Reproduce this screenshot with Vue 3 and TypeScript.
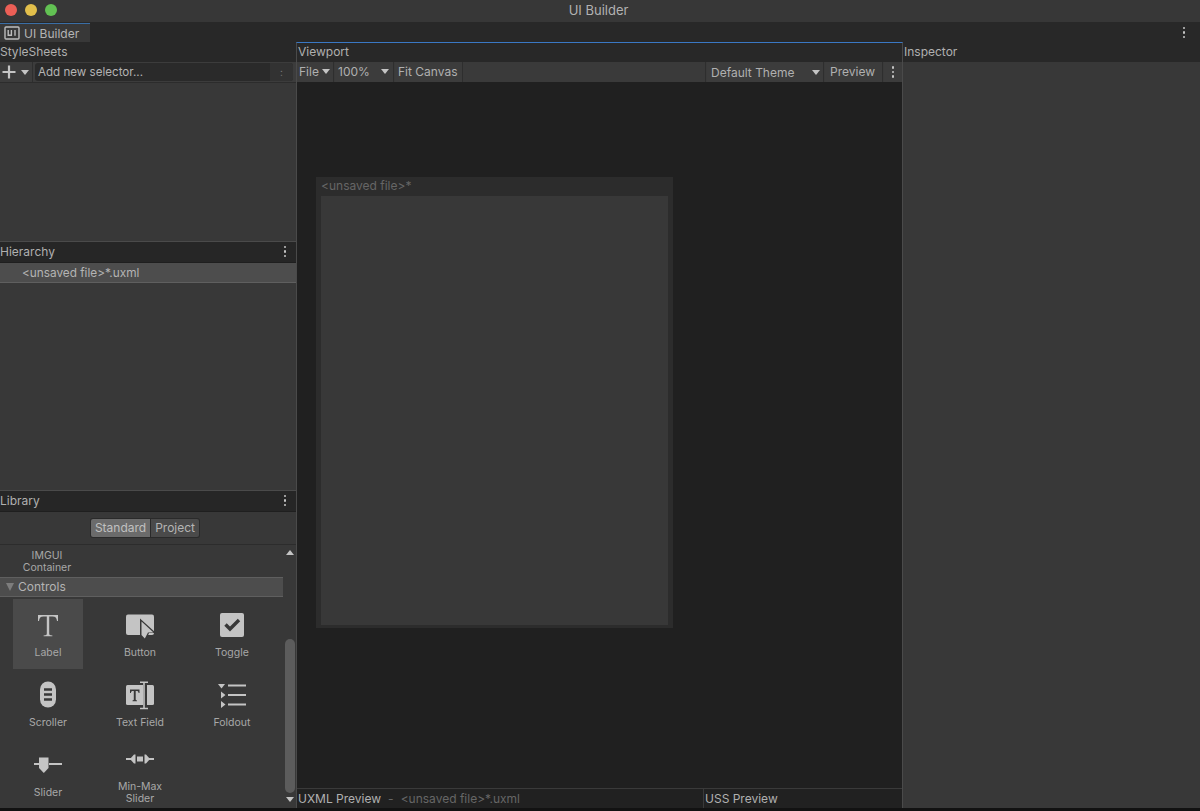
<script setup lang="ts">
interface Shape { d: string; fill?: string; stroke?: string; sw?: number }
interface Item { name: string[]; shapes: Shape[]; hot?: boolean }
const L = '#c4c4c4'
const D = '#383838'
const items: Item[] = [
  { name: ['Label'], hot: true, shapes: [
    { d: 'M6 6H26V12H25C24.6 9 23.6 7.6 20.5 7.6H17.2V24.5C17.2 26 18 26.2 20.4 26.4V27.2H11.6V26.4C14 26.2 14.8 26 14.8 24.5V7.6H11.5C8.4 7.6 7.4 9 7 12H6Z', fill: L } ] },
  { name: ['Button'], shapes: [
    { d: 'M4 5.5H28Q30 5.5 30 7.5V24Q30 26 28 26H4Q2 26 2 24V7.5Q2 5.5 4 5.5Z', fill: L },
    { d: 'M16 9.5L32 24H25L21.5 32L16 27Z', fill: D },
    { d: 'M17.5 12.5L29.5 23.5H24L20.8 29.5L17.5 26Z', fill: L } ] },
  { name: ['Toggle'], shapes: [
    { d: 'M6 4H26Q28 4 28 6V26Q28 28 26 28H6Q4 28 4 26V6Q4 4 6 4Z', fill: L },
    { d: 'M9.5 15.5L14 20L23 11', stroke: D, sw: 3.4 } ] },
  { name: ['Scroller'], shapes: [
    { d: 'M8 10.5A8 8 0 0 1 24 10.5V20.5A8 8 0 0 1 8 20.5Z', fill: L },
    { d: 'M12 10.5H20M12 15.5H20M12 20.5H20', stroke: D, sw: 2.4 } ] },
  { name: ['Text Field'], shapes: [
    { d: 'M3.5 6H19V26H3.5Q2 26 2 24.5V7.5Q2 6 3.5 6Z', fill: L },
    { d: 'M23 6H28.5Q30 6 30 7.5V24.5Q30 26 28.5 26H23Z', fill: L },
    { d: 'M16 3.2H24M20 3.2V29.5M16 29.5H24', stroke: L, sw: 1.6 },
    { d: 'M6 10.5H15.5V14H14.6C14.4 12.4 14 12 12.4 12H11.7V20.6C11.7 21.2 12 21.3 13 21.4V22.2H8.5V21.4C9.5 21.3 9.8 21.2 9.8 20.6V12H9.1C7.5 12 7.1 12.4 6.9 14H6Z', fill: D } ] },
  { name: ['Foldout'], shapes: [
    { d: 'M2 5H9L5.5 9.5Z', fill: L },
    { d: 'M12 6.5H30M12 16H30M12 25.5H30', stroke: L, sw: 1.8 },
    { d: 'M5 12.5L9.5 16L5 19.5ZM5 22L9.5 25.5L5 29Z', fill: L } ] },
  { name: ['Slider'], shapes: [
    { d: 'M2 15H7M17 15H30', stroke: L, sw: 1.8 },
    { d: 'M7 8.5H16.5V19L11.8 24L7 19Z', fill: L } ] },
  { name: ['Min-Max', 'Slider'], shapes: [
    { d: 'M2 16H7M25 16H30', stroke: L, sw: 2.2 },
    { d: 'M6 16L10 11.5H11.5V20.5H10ZM26 16L22 11.5H20.5V20.5H22Z', fill: L },
    { d: 'M13 13.5H19V18.5H13Z', fill: L } ] },
]
</script>

<template>
  <div class="app">
    <div class="titlebar">
      <div class="lights">
        <span class="light red"></span>
        <span class="light yellow"></span>
        <span class="light green"></span>
      </div>
      <span class="win-title">UI Builder</span>
    </div>

    <div class="tabstrip">
      <div class="tab">
        <svg class="tab-icon" width="16" height="14" viewBox="0 0 16 14">
          <rect x="1" y="1" width="14" height="12" rx="1" fill="none" stroke="#bdbdbd" stroke-width="1.4" />
          <path d="M4.2 4V9.2H7.4V4M11 4V9.8" fill="none" stroke="#bdbdbd" stroke-width="1.4" />
        </svg>
        <span>UI Builder</span>
      </div>
      <span class="kebab tab-kebab"><i></i><i></i><i></i></span>
    </div>

    <div class="main">
      <aside class="left">
        <div class="head top">StyleSheets</div>
        <div class="sel-bar">
          <div class="plus-wrap">
            <svg width="14" height="14" viewBox="0 0 14 14"><path d="M7 0.5V13.5M0.5 7H13.5" stroke="#c4c4c4" stroke-width="2.2" /></svg>
            <span class="tri small"></span>
          </div>
          <div class="sel-input">
            <span>Add new selector...</span>
            <span class="stepper">:</span>
          </div>
        </div>
        <div class="sheet-body"></div>

        <div class="head bordered">Hierarchy<span class="kebab"><i></i><i></i><i></i></span></div>
        <div class="hier-row">&lt;unsaved file&gt;*.uxml</div>
        <div class="hier-body"></div>

        <div class="head bordered">Library<span class="kebab"><i></i><i></i><i></i></span></div>
        <div class="lib-tabs">
          <div class="seg">
            <span class="seg-btn on">Standard</span>
            <span class="seg-btn">Project</span>
          </div>
        </div>
        <div class="lib-body">
          <div class="lib-list">
            <div class="imgui">IMGUI<br />Container</div>
            <div class="group"><span class="group-tri"></span>Controls</div>
            <div class="grid">
              <div v-for="item in items" :key="item.name.join()" class="cell" :class="{ hot: item.hot }">
                <svg class="cell-icon" width="32" height="32" viewBox="0 0 32 32">
                  <path v-for="(s, i) in item.shapes" :key="i" :d="s.d" :fill="s.fill || 'none'" :stroke="s.stroke || 'none'" :stroke-width="s.sw || 0" />
                </svg>
                <div class="cell-label">
                  <div v-for="n in item.name" :key="n">{{ n }}</div>
                </div>
              </div>
            </div>
          </div>
          <div class="scroll">
            <span class="arrow up"></span>
            <div class="track"><div class="thumb"></div></div>
            <span class="arrow down"></span>
          </div>
        </div>
      </aside>

      <section class="center">
        <div class="head plain">Viewport</div>
        <div class="vp-bar">
          <div class="vp-btn file">File<span class="tri"></span></div>
          <div class="vp-btn zoom">100%<span class="tri"></span></div>
          <div class="vp-btn fit">Fit Canvas</div>
          <div class="vp-space"></div>
          <div class="vp-btn theme">Default Theme<span class="tri"></span></div>
          <div class="vp-btn prev">Preview</div>
          <div class="vp-kebab"><span class="kebab"><i></i><i></i><i></i></span></div>
        </div>
        <div class="stage">
          <div class="canvas">
            <div class="canvas-title">&lt;unsaved file&gt;*</div>
            <div class="canvas-inner"></div>
          </div>
        </div>
        <div class="preview-bar">
          <div class="uxml"><span>UXML Preview</span><span class="muted dash">-</span><span class="muted">&lt;unsaved file&gt;*.uxml</span></div>
          <div class="uss">USS Preview</div>
        </div>
      </section>

      <aside class="right">
        <div class="head plain insp">Inspector</div>
        <div class="insp-body"></div>
      </aside>
    </div>
    <div class="foot"></div>
  </div>
</template>

<style scoped>
.app {
  width: 1200px;
  height: 811px;
  display: flex;
  flex-direction: column;
  overflow: hidden;
  background: #383838;
  color: #b0b0b0;
  font-family: Inter, "Liberation Sans", sans-serif;
  font-size: 12px;
}
.titlebar {
  height: 22px;
  flex: none;
  background: #373737;
  position: relative;
  display: flex;
  align-items: center;
  justify-content: center;
}
.lights { position: absolute; left: 5px; top: 4px; display: flex; gap: 8px; }
.light { width: 12px; height: 12px; border-radius: 50%; }
.red { background: #ec5f56; }
.yellow { background: #e2bf4b; }
.green { background: #62c153; }
.win-title { font-size: 13px; color: #b2b2b2; margin-left: -3px; margin-top: -2px; }
.tabstrip {
  height: 20px;
  flex: none;
  background: #282828;
  display: flex;
  align-items: flex-end;
  justify-content: space-between;
}
.tab {
  width: 90px;
  height: 19px;
  background: #383838;
  border-top: 1px solid #3a6ea5;
  box-sizing: border-box;
  display: flex;
  align-items: center;
  padding-left: 4px;
  gap: 4px;
  color: #b4b4b4;
}
.tab-kebab { margin: 0 15px 4px 0; }
.kebab { display: inline-flex; flex-direction: column; gap: 2px; }
.kebab i { width: 2.4px; height: 2.4px; border-radius: 50%; background: #c4c4c4; display: block; }
.main { flex: 1; display: flex; min-height: 0; }
.left { width: 296px; flex: none; display: flex; flex-direction: column; background: #383838; }
.head {
  height: 20px;
  flex: none;
  background: #282828;
  display: flex;
  align-items: center;
  justify-content: space-between;
  padding: 0 10px 0 0;
  box-sizing: border-box;
}
.head.top { padding-bottom: 1px; }
.head.bordered {
  height: 22px;
  border-top: 1px solid #4a4a4a;
  border-bottom: 1px solid #1f1f1f;
  background: #262626;
  padding-bottom: 1px;
}
.head.plain { padding-left: 1px; padding-bottom: 1px; }
.center .head.plain { height: 19px; padding-bottom: 2px; }
.sel-bar {
  height: 21px;
  flex: none;
  display: flex;
  background: #3c3c3c;
  border-bottom: 1px solid #2c2c2c;
  box-sizing: border-box;
}
.plus-wrap {
  width: 33px;
  flex: none;
  display: flex;
  align-items: center;
  gap: 5px;
  padding-left: 2px;
  box-sizing: border-box;
  border-right: 1px solid #2e2e2e;
}
.tri {
  width: 0;
  height: 0;
  border-left: 4px solid transparent;
  border-right: 4px solid transparent;
  border-top: 5px solid #c4c4c4;
  display: inline-block;
}
.sel-input {
  margin: 1px 3px 1px 2px;
  flex: 1;
  background: #2a2a2a;
  border-radius: 3px;
  display: flex;
  justify-content: space-between;
  padding-left: 3px;
  align-items: center;
  color: #b4b4b4;
  font-size: 11.6px;
}
.stepper {
  width: 23px;
  align-self: stretch;
  background: #323232;
  color: #777;
  text-align: center;
  font-size: 10px;
  line-height: 18px;
  border-radius: 0 3px 3px 0;
}
.sheet-body { height: 158px; flex: none; }
.hier-row {
  height: 20px;
  flex: none;
  background: #4d4d4d;
  border-bottom: 1px solid #5f5f5f;
  box-sizing: border-box;
  padding-left: 22px;
  line-height: 21px;
  color: #b4b4b4;
  font-size: 11.8px;
}
.hier-body { height: 207px; flex: none; }
.lib-tabs {
  height: 33px;
  flex: none;
  display: flex;
  justify-content: center;
  align-items: center;
  border-bottom: 1px solid #2c2c2c;
  box-sizing: border-box;
  padding-right: 6px;
}
.seg { display: flex; background: #2a2a2a; border-radius: 3px; padding: 1px; gap: 1px; }
.seg-btn { height: 18px; line-height: 18px; background: #4a4a4a; padding: 0 4px; color: #b4b4b4; border-radius: 0 2px 2px 0; }
.seg-btn.on { background: #6b6b6b; color: #c0c0c0; border-radius: 2px 0 0 2px; padding: 0 4px; }
.lib-body { flex: 1; display: flex; min-height: 0; }
.lib-list { width: 283px; flex: none; overflow: hidden; }
.imgui {
  width: 70px;
  margin-left: 12px;
  padding-top: 5px;
  height: 27px;
  box-sizing: content-box;
  text-align: center;
  font-size: 10.5px;
  line-height: 12px;
  color: #a8a8a8;
}
.group {
  height: 20px;
  background: #4d4d4d;
  border-top: 1px solid #5f5f5f;
  border-bottom: 1px solid #5f5f5f;
  box-sizing: border-box;
  display: flex;
  align-items: center;
  gap: 4px;
  padding-left: 6px;
  padding-bottom: 1px;
  color: #b4b4b4;
}
.group-tri {
  width: 0;
  height: 0;
  border-left: 4.5px solid transparent;
  border-right: 4.5px solid transparent;
  border-top: 8px solid #7d7d7d;
}
.grid {
  display: grid;
  grid-template-columns: repeat(3, 70px);
  grid-auto-rows: 70px;
  column-gap: 22px;
  padding-left: 13px;
  padding-top: 2px;
}
.cell {
  display: flex;
  flex-direction: column;
  align-items: center;
  justify-content: center;
  gap: 6px;
  color: #a8a8a8;
  font-size: 10.5px;
  line-height: 12px;
  text-align: center;
}
.cell.hot { background: #4a4a4a; }
.cell-icon { flex: none; margin-top: -1px; }
.cell-label { white-space: nowrap; }
.scroll { width: 13px; flex: none; display: flex; flex-direction: column; align-items: center; padding-top: 5px; box-sizing: border-box; }
.arrow { width: 0; height: 0; border-left: 4px solid transparent; border-right: 4px solid transparent; flex: none; }
.arrow.up { border-bottom: 5px solid #c4c4c4; }
.arrow.down { border-top: 5px solid #c4c4c4; margin-bottom: 6px; }
.track { flex: 1; width: 100%; display: flex; flex-direction: column; justify-content: flex-end; align-items: center; padding-bottom: 4px; box-sizing: border-box; }
.thumb { width: 10px; height: 154px; background: #5c5c5c; border-radius: 5px; }
.center {
  width: 607px;
  flex: none;
  display: flex;
  flex-direction: column;
  box-sizing: border-box;
  border-top: 1px solid #3a78c4;
  border-left: 1px solid #4a4a4a;
  border-right: 1px solid #4a4a4a;
  background: #202020;
}
.vp-bar { height: 20px; flex: none; display: flex; background: #3a3a3a; gap: 1px; white-space: nowrap; }
.vp-btn {
  background: #3c3c3c;
  display: flex;
  align-items: center;
  justify-content: space-between;
  box-sizing: border-box;
  padding: 0 3px 1px;
  color: #b0b0b0;
  border-right: 1px solid #2e2e2e;
}
.file { width: 37px; padding-left: 2px; }
.zoom { width: 59px; padding-right: 4px; }
.fit { width: 68px; }
.vp-space { flex: 1; border-right: 1px solid #2e2e2e; }
.theme { width: 117px; padding-left: 4px; padding-right: 3px; padding-bottom: 0; }
.prev { width: 58px; padding-left: 5px; padding-bottom: 1px; }
.vp-kebab { width: 18px; display: flex; align-items: center; justify-content: center; background: #3c3c3c; }
.stage { flex: 1; min-height: 0; padding: 95px 0 0 19px; box-sizing: border-box; }
.canvas {
  width: 357px;
  height: 451px;
  background: #2c2c2c;
  box-sizing: border-box;
  padding: 0 5px 3px 5px;
  display: flex;
  flex-direction: column;
}
.canvas-title { height: 19px; flex: none; line-height: 18px; color: #666; }
.canvas-inner { flex: 1; background: #383838; }
.preview-bar {
  height: 20px;
  flex: none;
  display: flex;
  border-top: 1px solid #3a3a3a;
  box-sizing: border-box;
  background: #212121;
  line-height: 20px;
}
.uxml { width: 407px; flex: none; padding-left: 1px; box-sizing: border-box; border-right: 1px solid #3a3a3a; display: flex; gap: 6px; }
.muted { color: #666; font-size: 12px; }
.dash { margin: 0 1px; }
.uss { padding-left: 1px; }
.right { flex: 1; display: flex; flex-direction: column; }
.insp-body { flex: 1; background: #383838; }
.foot { height: 3px; flex: none; background: #121212; }
</style>
